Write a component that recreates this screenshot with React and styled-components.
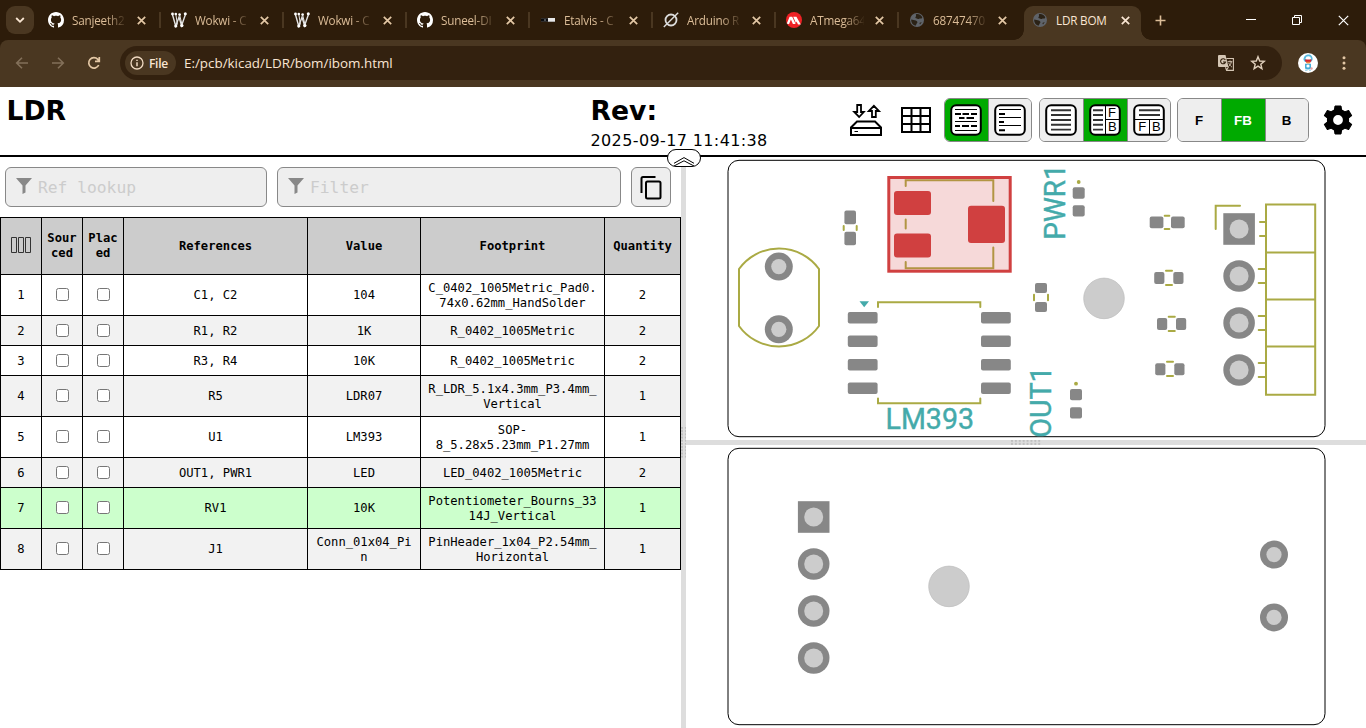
import React from "react";
import styled, { createGlobalStyle, css } from "styled-components";

const GlobalStyle = createGlobalStyle`
  * { box-sizing: border-box; }
  html, body { margin: 0; padding: 0; }
  body { width: 1366px; height: 728px; overflow: hidden; background: #fff; }
  svg { display: block; flex: none; }
`;

const MONO = '"DejaVu Sans Mono", "Liberation Mono", monospace';
const UI = '"Open Sans", "Noto Sans", sans-serif';

/* ---------- browser chrome ---------- */

const Screen = styled.div`
  display: flex;
  flex-direction: column;
  width: 1366px;
  height: 728px;
  color: #000;
  font-family: "DejaVu Sans", sans-serif;
`;

const TabStrip = styled.div`
  display: flex;
  height: 40px;
  padding-left: 6px;
  background: #2d1c0a;
  font-family: ${UI};
`;

const TabSearch = styled.button`
  display: flex;
  align-items: center;
  justify-content: center;
  width: 28px;
  height: 28px;
  margin: 6px 4px 0 0;
  padding: 0;
  border: 0;
  border-radius: 9px;
  background: #4a3721;
`;

const Tab = styled.div`
  position: relative;
  display: flex;
  align-items: center;
  width: 123px;
  height: 40px;
  padding-left: 10px;
  color: ${(p) => (p.$active ? "#fae6d3" : "#dcbd98")};
  ${(p) =>
    p.$active &&
    css`
      width: 117px;
      height: 34px;
      margin: 6px 0 0 2px;
      padding: 0 0 6px 8px;
      border-radius: 9px 9px 0 0;
      background: #4a3721;
      &::before,
      &::after {
        content: "";
        position: absolute;
        bottom: 0;
        width: 10px;
        height: 10px;
      }
      &::before {
        left: -10px;
        background: radial-gradient(circle at 0 0, transparent 9.5px, #4a3721 10px);
      }
      &::after {
        right: -10px;
        background: radial-gradient(circle at 100% 0, transparent 9.5px, #4a3721 10px);
      }
    `}
`;

const TabTitle = styled.span`
  flex: none;
  width: 54px;
  margin-left: 8px;
  font-size: 11.7px;
  line-height: 18px;
  letter-spacing: -0.2px;
  white-space: nowrap;
  ${(p) =>
    p.$fade &&
    css`
      mask-image: linear-gradient(90deg, #000 34px, transparent 55px);
    `}
`;

const TabClose = styled.span`
  margin-left: 10.5px;
`;

const TabDivider = styled.i`
  width: 2px;
  height: 16px;
  margin-left: auto;
  background: #4a3721;
`;

const StripAction = styled.div`
  display: flex;
  align-items: center;
  justify-content: center;
  width: ${(p) => p.$w}px;
  height: 40px;
  margin-left: ${(p) => p.$gap || 0}px;
`;

const ToolbarBack = styled.div`
  background: #2d1c0a;
`;

const Toolbar = styled.div`
  display: flex;
  align-items: center;
  height: 47px;
  padding: 0 13px 1px 14px;
  border-radius: 8px 8px 0 0;
  background: #4a3721;
  font-family: ${UI};
`;

const NavIcon = styled.div`
  width: 16px;
  height: 16px;
  margin-right: 20px;
`;

const AddressBar = styled.div`
  display: flex;
  align-items: center;
  width: 1162px;
  height: 34px;
  margin-left: -2px;
  padding: 0 16px 0 5px;
  border-radius: 17px;
  background: #33210f;
`;

const FileChip = styled.div`
  display: flex;
  align-items: center;
  gap: 5px;
  width: 51px;
  height: 24px;
  padding-left: 5px;
  border-radius: 12px;
  background: #4a3721;
  color: #fae6d3;
  font-size: 12px;
  font-weight: 600;
  letter-spacing: -0.3px;
`;

const Url = styled.span`
  flex: 1;
  margin-left: 8px;
  color: #fae6d3;
  font-size: 13.4px;
`;

const AddressIcons = styled.div`
  display: flex;
  gap: 16px;
`;

const Avatar = styled.div`
  margin: 0 24px 0 16px;
`;

/* ---------- page header ---------- */

const TopBar = styled.header`
  position: relative;
  display: flex;
  height: 70px;
  border-bottom: 2px solid #000;
`;

const FileInfo = styled.div`
  display: flex;
  width: 850px;
  padding: 7px 0 0 6.5px;
`;

const InfoColumn = styled.div`
  width: ${(p) => p.$w}px;
`;

const InfoTitle = styled.div`
  font-size: 26.67px;
  font-weight: 700;
  line-height: 34px;
`;

const InfoDate = styled.div`
  padding-top: 3px;
  font-size: 16px;
  line-height: 20px;
  letter-spacing: 0.38px;
`;

const Controls = styled.div`
  display: flex;
  align-items: flex-start;
  padding-top: 11px;
`;

const IconControl = styled.div`
  display: flex;
  align-items: center;
  height: 44px;
  margin-right: ${(p) => p.$gap || 0}px;
`;

const ButtonGroup = styled.div`
  display: flex;
  height: 44px;
  margin-right: ${(p) => p.$gap}px;
  overflow: hidden;
  border: 1px solid #888;
  border-radius: 6px;
`;

const GroupButton = styled.button`
  display: flex;
  align-items: center;
  justify-content: center;
  width: 44px;
  padding: 0 1px 0 0;
  border: 0;
  border-left: 1px solid #888;
  background: ${(p) => (p.$on ? "#0a0" : "#eee")};
  color: ${(p) => (p.$on ? "#fff" : "#000")};
  font: bold 13.33px "Liberation Sans", sans-serif;
  &:first-child {
    width: 43px;
    border-left: 0;
  }
  &:last-child {
    width: 43px;
  }
`;

const CollapseHandle = styled.div`
  position: absolute;
  left: 667px;
  top: 62px;
  z-index: 2;
  display: flex;
  justify-content: center;
  width: 34px;
  height: 18px;
  padding-top: 6px;
  border: 1px solid #000;
  border-radius: 9px;
  background: #fff;
`;

/* ---------- parts list ---------- */

const Main = styled.main`
  display: flex;
  flex: 1;
  min-height: 0;
`;

const BomPane = styled.section`
  width: 681px;
`;

const SearchRow = styled.div`
  display: flex;
  gap: 10px;
  height: 60px;
  padding: 10px 5px;
`;

const FilterField = styled.div`
  display: flex;
  align-items: center;
  width: ${(p) => p.$w}px;
  height: 40px;
  padding-left: 10px;
  border: 1px solid #888;
  border-radius: 6px;
  background: #eee;
  svg {
    margin-top: -2px;
  }
`;

const FilterInput = styled.input`
  flex: 1;
  min-width: 0;
  margin-left: 6px;
  padding: 0;
  border: 0;
  outline: 0;
  background: none;
  font: 16.3px ${MONO};
  &::placeholder {
    color: #ccc;
    opacity: 1;
  }
`;

const CopyButton = styled.button`
  display: flex;
  align-items: center;
  justify-content: center;
  width: 40px;
  height: 40px;
  padding: 0 1px 1px 0;
  border: 1px solid #888;
  border-radius: 6px;
  background: #eee;
`;

const BomTable = styled.table`
  width: 681px;
  table-layout: fixed;
  border: 0 solid #000;
  border-width: 1px 0 0 1px;
  border-spacing: 0;
  font: 12.17px/15px ${MONO};
  text-align: center;
`;

const cell = css`
  padding: 1px 5px 0;
  border: 0 solid #000;
  border-width: 0 1px 1px 0;
  word-break: break-all;
  vertical-align: middle;
`;

const HeadCell = styled.th`
  ${cell}
  height: 57px;
  padding: 0 4px;
  background: #ccc;
`;

const BomRow = styled.tr`
  height: ${(p) => (p.$tall ? 41 : 30)}px;
  background: ${(p) => (p.$selected ? "#cfc" : p.$alt ? "#f2f2f2" : "#fff")};
`;

const Cell = styled.td`
  ${cell}
`;

const CheckCell = styled.td`
  ${cell}
  padding: 0 0 1px;
`;

const Check = styled.input`
  display: block;
  width: 13px;
  height: 13px;
  margin: 0 auto;
`;

const ColumnsIcon = styled.svg`
  margin: -2px auto 0;
`;

/* ---------- board views ---------- */

const VGutter = styled.div`
  display: flex;
  justify-content: center;
  align-items: center;
  width: 5px;
  background: #ddd;
`;

const HGutter = styled(VGutter)`
  width: 100%;
  height: 5px;
`;

const Grip = styled.i`
  width: ${(p) => (p.$h ? 31 : 5)}px;
  height: ${(p) => (p.$h ? 5 : 31)}px;
  background: radial-gradient(circle at 1px 1px, #bfbfbf 1px, transparent 1.2px) 0 0 / 3.9px 3.2px;
`;

const BoardPane = styled.section`
  display: flex;
  flex-direction: column;
  width: 680px;
`;

const columns = [41, 41, 41, 184, 113, 184, 76];

const parts = [
  ["C1, C2", "104", ["C_0402_1005Metric_Pad0.", "74x0.62mm_HandSolder"], 2],
  ["R1, R2", "1K", ["R_0402_1005Metric"], 2],
  ["R3, R4", "10K", ["R_0402_1005Metric"], 2],
  ["R5", "LDR07", ["R_LDR_5.1x4.3mm_P3.4mm_", "Vertical"], 1],
  ["U1", "LM393", ["SOP-", "8_5.28x5.23mm_P1.27mm"], 1],
  ["OUT1, PWR1", "LED", ["LED_0402_1005Metric"], 2],
  ["RV1", "10K", ["Potentiometer_Bourns_33", "14J_Vertical"], 1],
  ["J1", "Conn_01x04_Pin", ["PinHeader_1x04_P2.54mm_", "Horizontal"], 1],
];

/* ---------- icons ---------- */

const Cross = ({ size = 9, color = "#e3c7a5", w = 1.7 }) => (
  <svg width={size} height={size} viewBox={`0 0 ${size} ${size}`}>
    <path d={`M.8 .8L${size - 0.8} ${size - 0.8}M${size - 0.8} .8L.8 ${size - 0.8}`} stroke={color} strokeWidth={w} />
  </svg>
);

const GithubIcon = () => (
  <svg width="16" height="16" viewBox="0 0 16 16">
    <path
      fill="#fff"
      d="M8 0C3.58 0 0 3.58 0 8c0 3.54 2.29 6.53 5.47 7.59.4.07.55-.17.55-.38 0-.19-.01-.82-.01-1.49-2.01.37-2.53-.49-2.69-.94-.09-.23-.48-.94-.82-1.13-.28-.15-.68-.52-.01-.53.63-.01 1.08.58 1.23.82.72 1.21 1.87.87 2.33.66.07-.52.28-.87.51-1.07-1.78-.2-3.64-.89-3.64-3.95 0-.87.31-1.59.82-2.15-.08-.2-.36-1.02.08-2.12 0 0 .67-.21 2.2.82.64-.18 1.32-.27 2-.27s1.36.09 2 .27c1.53-1.04 2.2-.82 2.2-.82.44 1.1.16 1.92.08 2.12.51.56.82 1.27.82 2.15 0 3.07-1.87 3.75-3.65 3.95.29.25.54.73.54 1.48 0 1.07-.01 1.93-.01 2.2 0 .21.15.46.55.38A8.01 8.01 0 0 0 16 8c0-4.42-3.58-8-8-8z"
    />
  </svg>
);

const WokwiIcon = () => (
  <svg width="16" height="16" viewBox="0 0 16 16" fill="none" stroke="#e4e4e4">
    <path d="M1.3 2L4.7 14L8 5.2L10.6 13.6L14.6 2" strokeWidth="1.4" />
    <path d="M4.8 2L6.4 12.6M8.6 2.8L11 12.6" strokeWidth="1" />
    <g fill="#fff" stroke="none">
      <circle cx="1.5" cy="2" r="1.4" />
      <circle cx="4.8" cy="2" r="1.3" />
      <circle cx="8.6" cy="2.5" r="1.3" />
      <circle cx="14.3" cy="1.8" r="1.5" />
      <circle cx="4.8" cy="14" r="1.6" />
      <circle cx="10.8" cy="13.6" r="1.7" />
    </g>
  </svg>
);

const EtalvisIcon = () => (
  <svg width="16" height="16" viewBox="0 0 16 16">
    <rect x="1" y="6" width="14" height="4" fill="#55504c" />
    <rect x="1" y="6.5" width="7" height="3" fill="#0b0b0e" />
    <rect x="8" y="6" width="7" height="3.6" fill="#e8e8e8" />
    <path d="M4 8h2" stroke="#8c9196" />
  </svg>
);

const ArduinoIcon = () => (
  <svg width="16" height="16" viewBox="0 0 16 16" fill="none" stroke="#dcdcdc">
    <circle cx="8" cy="8" r="5.5" strokeWidth="1.8" />
    <path d="M.8 15L15.2 .8" strokeWidth="1.4" />
  </svg>
);

const MicrochipIcon = () => (
  <svg width="16" height="16" viewBox="0 0 16 16">
    <circle cx="8" cy="8" r="8" fill="#ee2125" />
    <path d="M.8 11.5L3.6 4.8H6.2L9.6 12H6.9L4.9 7.6L3 12.2zM7.2 4.8H10.4L14.8 12.4L12 12.4L10.6 9.6L9.9 11z" fill="#fff" />
  </svg>
);

const GlobeIcon = () => (
  <svg width="16" height="16" viewBox="0 0 16 16">
    <circle cx="8" cy="8" r="7" fill="#5f6369" />
    <path
      d="M6.8 2.3C9.6 1.6 12.4 3 13.3 5.6C12.4 7.6 11.6 6 10.2 6.8C9 7.6 8.6 6.6 7 6.2C5.4 5.8 7.8 4.6 6.8 2.3zM2.2 7.4L5.8 8.2C7 8.6 8.8 9 8.4 10.6C7.8 11.6 7.2 11.8 7 13.6C4 13.2 2 10.6 2.2 7.4zM12.8 10L11 12.4L10.4 11z"
      fill="#2b2216"
    />
  </svg>
);

const tabs = [
  ["Sanjeeth2", GithubIcon],
  ["Wokwi - C", WokwiIcon],
  ["Wokwi - C", WokwiIcon],
  ["Suneel-DI", GithubIcon],
  ["Etalvis - C", EtalvisIcon],
  ["Arduino R", ArduinoIcon],
  ["ATmega64", MicrochipIcon],
  ["68747470", GlobeIcon],
];

const SaveIcon = () => (
  <svg width="32" height="32" viewBox="0 0 32 32" fill="none" stroke="#000" strokeWidth="2">
    <path d="M1 31V23.5L7 17.5H25L31 23.5V31ZM1 24H31" />
    <path d="M4.5 27.5H8" strokeWidth="1" />
    <path d="M7.2 1H11V8H13.8L9.1 13L4.2 8H7.2Z" strokeWidth="1.8" />
    <path d="M22 13H25.8V7H29L23.9 1.8L18.8 7H22Z" strokeWidth="1.8" />
  </svg>
);

const GridIcon = () => (
  <svg width="32" height="32" viewBox="0 0 32 32" fill="none" stroke="#000" strokeWidth="2">
    <path d="M2 4H30V28H2ZM2 12H30M2 20H30M11.5 4V28M20.5 4V28" />
  </svg>
);

const Page = ({ children }) => (
  <svg width="32" height="32" viewBox="0 0 32 32" fill="none" stroke="#000">
    <rect x="1.2" y="1.2" width="29.6" height="29.6" rx="5" fill="#fff" strokeWidth="2" />
    {children}
  </svg>
);

const letter = {
  fill: "#000",
  stroke: "none",
  fontFamily: '"Liberation Sans", sans-serif',
  fontSize: 13,
  fontWeight: 400,
  textAnchor: "middle",
};

const Funnel = () => (
  <svg width="16" height="16" viewBox="0 0 16 16">
    <path d="M0 0H16L9.5 7.5V14.5L6.5 16V7.5Z" fill="#888" />
  </svg>
);

const Gear = () => (
  <svg width="32" height="32" viewBox="0 0 32 32" fill="none">
    <circle cx="16" cy="16" r="8" stroke="#000" strokeWidth="6.2" />
    {[0, 60, 120, 180, 240, 300].map((a) => (
      <path key={a} d="M12.3 6.5L13 2H19L19.7 6.5Z" fill="#000" stroke="#000" strokeLinejoin="round" transform={`rotate(${a} 16 16)`} />
    ))}
  </svg>
);

/* ---------- board drawings ---------- */

const Pads = ({ items, r = 2, fill = "#878787" }) =>
  items.map(([x1, y1, x2, y2], i) => (
    <rect key={i} x={x1} y={y1} width={x2 - x1} height={y2 - y1} rx={r} fill={fill} />
  ));

const Pin = ({ x, y, r = 15.8, hole = 9.5, square }) => (
  <g fill="#878787">
    {square ? <rect x={x - r} y={y - r} width={2 * r} height={2 * r} /> : <circle cx={x} cy={y} r={r} />}
    <circle cx={x} cy={y} r={hole} fill="#ccc" />
  </g>
);

const Outline = ({ y }) => (
  <rect x="728" y={y} width="597" height="276.4" rx="11" fill="none" stroke="#000" strokeWidth="1" />
);

const MountHole = ({ x, y }) => <circle cx={x} cy={y} r="20.3" fill="#ccc" stroke="#bbb" strokeWidth=".7" />;

const silkText = {
  fill: "#4aa",
  stroke: "#4aa",
  strokeWidth: 0.4,
  fontFamily: "Roboto, sans-serif",
  fontSize: 29,
  lengthAdjust: "spacingAndGlyphs",
};

const FrontBoard = () => (
  <svg width="680" height="283" viewBox="686 157 680 283">
    <Outline y={160.3} />
    <MountHole x={1104} y={298.4} />
    <g fill="none" stroke="#aa4" strokeWidth="2" strokeLinecap="round">
      <path d="M739 269V326M819 269V326M739 269A49.2 49.2 0 0 1 819 269M739 326A49.2 49.2 0 0 0 819 326" />
      <path d="M843.7 226V230M856.7 226V230" />
      <path d="M905.7 186V180.3H993.3V201M905.7 219.5V228.5M905.7 262V268.3H993.3V247.5" />
      <path d="M878 307V302.3H980.3V307M878 398.5V403.3H980.3V398.5" />
      <path d="M1034 294.7V300.3M1048 294.7V300.3" />
      <path d="M1164.7 215.7H1169.3M1164.7 229H1169.3" />
      <path d="M1166 270.7H1172M1166 285H1172" />
      <path d="M1168.7 316.7H1174.8M1168.7 331H1174.8" />
      <path d="M1167 361.7H1173M1167 376H1173" />
      <path d="M1240 205.7H1215.7V229" />
      <path d="M1266 204.5H1315.2V394.7H1266ZM1266 252.5H1315M1266 299.4H1315M1266 346.4H1315" />
      <path d="M1260 222H1266M1260 236H1266M1258.7 269H1266M1258.7 283H1266M1258.7 316H1266M1258.7 330H1266M1258.7 363H1266M1258.7 377H1266" />
    </g>
    <g fill="#aa4">
      <circle cx="1078.7" cy="182" r="1.9" />
      <circle cx="1076" cy="383.7" r="1.9" />
    </g>
    <Pin x={778.8} y={266.6} r={14} hole={7.6} />
    <Pin x={778.8} y={329.3} r={14} hole={7.6} />
    <Pads
      items={[
        [844.4, 210.5, 856, 224.3],
        [844.4, 231.8, 856, 245.3],
        [1035, 283, 1047, 293],
        [1035, 302, 1047, 312],
        [1072.7, 187.3, 1084.7, 198.7],
        [1072.7, 205.2, 1084.7, 216.5],
        [1070, 389, 1082, 400.3],
        [1070, 407.2, 1082, 418.5],
        [1149.7, 216.6, 1163.4, 228.2],
        [1171, 216.6, 1184.7, 228.2],
        [1154.2, 272, 1164.4, 284],
        [1173.3, 272, 1183.5, 284],
        [1157, 318, 1167.2, 330],
        [1176, 318, 1186.2, 330],
        [1155.2, 363.2, 1165.4, 375.2],
        [1174.3, 363.2, 1184.5, 375.2],
      ]}
    />
    {[312.1, 335.5, 359, 382.5].map((y) => (
      <Pads key={y} items={[[847.8, y, 877.6, y + 11.4], [981, y, 1010.8, y + 11.4]]} />
    ))}
    <path d="M859.5 301.2H869L864.2 307.2Z" fill="#4aa" />
    <rect x="888.8" y="177.5" width="121.4" height="93.7" fill="#d04040" fillOpacity=".2" stroke="#d04040" strokeWidth="3" />
    <Pads
      r={3}
      fill="#d04040"
      items={[
        [894, 191, 931, 215],
        [894, 233.4, 931, 257.6],
        [968, 205.7, 1005, 243],
      ]}
    />
    <Pin x={1239.1} y={229} square />
    {[276, 323, 370].map((y) => (
      <Pin key={y} x={1239.1} y={y} />
    ))}
    <text x="885.5" y="428.8" textLength="88.5" {...silkText}>LM393</text>
    <text textLength="75.5" transform="translate(1064.6 239.7) rotate(-90)" {...silkText}>PWR1</text>
    <text textLength="71.5" transform="translate(1050.8 437.8) rotate(-90)" {...silkText}>OUT1</text>
  </svg>
);

const BackBoard = () => (
  <svg width="680" height="283" viewBox="686 445 680 283">
    <Outline y={448.3} />
    <MountHole x={949} y={586.4} />
    <Pin x={813.7} y={517} square />
    {[564, 611, 658].map((y) => (
      <Pin key={y} x={813.7} y={y} />
    ))}
    <Pin x={1274} y={554.6} r={14} hole={7.6} />
    <Pin x={1274} y={617.4} r={14} hole={7.6} />
  </svg>
);

/* ---------- sections ---------- */

function BrowserChrome() {
  return (
    <>
      <TabStrip>
        <TabSearch>
          <svg width="10" height="8" viewBox="0 0 10 8" fill="none" stroke="#fae6d3" strokeWidth="1.8">
            <path d="M1.2 2L5 5.8L8.8 2" />
          </svg>
        </TabSearch>
        {tabs.map(([title, Icon], i) => (
          <Tab key={i}>
            <Icon />
            <TabTitle $fade>{title}</TabTitle>
            <TabClose><Cross /></TabClose>
            {i < 7 && <TabDivider />}
          </Tab>
        ))}
        <Tab $active>
          <GlobeIcon />
          <TabTitle>LDR BOM</TabTitle>
          <TabClose><Cross color="#fae6d3" /></TabClose>
        </Tab>
        <StripAction $w={39}>
          <svg width="11" height="11" viewBox="0 0 11 11" stroke="#dcbd98" strokeWidth="1.6">
            <path d="M5.5 .5V10.5M.5 5.5H10.5" />
          </svg>
        </StripAction>
        <StripAction $w={46} $gap={48}>
          <svg width="10" height="2"><rect width="10" height="1" fill="#fff" /></svg>
        </StripAction>
        <StripAction $w={46}>
          <svg width="10" height="10" viewBox="0 0 10 10" fill="none" stroke="#fff">
            <path d="M.5 2.5H7.5V9.5H.5ZM2.5 2.5V.5H9.5V7.5H7.5" />
          </svg>
        </StripAction>
        <StripAction $w={46}>
          <Cross size={11} color="#fff" w={1.2} />
        </StripAction>
      </TabStrip>
      <ToolbarBack>
        <Toolbar>
          <NavIcon>
            <svg width="16" height="16" viewBox="0 0 16 16" fill="none" stroke="#83705a" strokeWidth="1.6">
              <path d="M14 8H3M8 2.7L2.7 8L8 13.3" />
            </svg>
          </NavIcon>
          <NavIcon>
            <svg width="16" height="16" viewBox="0 0 16 16" fill="none" stroke="#83705a" strokeWidth="1.6">
              <path d="M2 8H13M8 2.7L13.3 8L8 13.3" />
            </svg>
          </NavIcon>
          <NavIcon>
            <svg width="16" height="16" viewBox="0 0 16 16" fill="none" stroke="#e3c7a5" strokeWidth="1.7">
              <path d="M12.7 10A5.2 5.2 0 1 1 11.8 4.4L13.2 6M13.3 2V6.3H9" />
            </svg>
          </NavIcon>
          <AddressBar>
            <FileChip>
              <svg width="14" height="14" viewBox="0 0 14 14" fill="none" stroke="#f0dac2" strokeWidth="1.3">
                <circle cx="7" cy="7" r="6" />
                <path d="M7 6.2V10.2M7 3.8V5.1" strokeWidth="1.5" />
              </svg>
              File
            </FileChip>
            <Url>E:/pcb/kicad/LDR/bom/ibom.html</Url>
            <AddressIcons>
              <svg width="16" height="16" viewBox="0 0 16 16">
                <path d="M1 0H7.5L10.5 12H1A1 1 0 0 1 0 11V1A1 1 0 0 1 1 0Z" fill="#d5c6b4" />
                <path d="M7.3 5.1A2.5 2.5 0 1 0 7.5 7H5" fill="none" stroke="#33210f" strokeWidth="1.1" />
                <path d="M8.3 3.5H15.4V15.4H8.6L7.5 12.3M8.5 15L10.5 12" fill="none" stroke="#d5c6b4" strokeWidth="1.1" />
                <path d="M9.6 6.7H14.3M12 5.5V6.7M13.3 6.7C13 9.4 11.5 10.6 10.5 11.4M10.8 8.2C11.5 10 12.6 11 13.8 12" fill="none" stroke="#d5c6b4" />
              </svg>
              <svg width="16" height="16" viewBox="0 0 16 16" fill="none" stroke="#e0cfbb" strokeWidth="1.4">
                <path d="M8 1.7L9.7 6L14.3 6.3L10.8 9.2L11.9 13.7L8 11.2L4.1 13.7L5.2 9.2L1.7 6.3L6.3 6Z" />
              </svg>
            </AddressIcons>
          </AddressBar>
          <Avatar>
            <svg width="20" height="20" viewBox="0 0 20 20">
              <circle cx="10" cy="10" r="10" fill="#fff" />
              <path d="M5.5 7C5.5 3 8 1.5 10.5 1.5S15 3.5 14.5 7L13 9H7Z" fill="#58b9df" />
              <ellipse cx="10.3" cy="5.2" rx="2.6" ry="2" fill="#fff" />
              <path d="M6.8 6.5H13.7Q13 10 10.2 10Q7.5 10 6.8 6.5Z" fill="#d72630" />
              <path d="M8 8.8H12.5L11.5 10.4H9Z" fill="#ef8c3c" />
              <path d="M7 10.8H13V15.5Q10 17.5 7 15.5Z" fill="#48aed9" />
              <circle cx="10" cy="13" r="1.6" fill="#fff" />
              <circle cx="13.5" cy="15.5" r="1.2" fill="#e8a0a0" />
              <path d="M7 17.2H9.5M11 17.2H13" stroke="#8acbe4" />
            </svg>
          </Avatar>
          <svg width="4" height="16" viewBox="0 0 4 16" fill="#e3c7a5">
            <circle cx="2" cy="2.8" r="1.5" />
            <circle cx="2" cy="8" r="1.5" />
            <circle cx="2" cy="13.2" r="1.5" />
          </svg>
        </Toolbar>
      </ToolbarBack>
    </>
  );
}

const listLines = { stroke: "#333", strokeWidth: 1.9 };

function Header() {
  return (
    <TopBar>
      <FileInfo>
        <InfoColumn $w={584}>
          <InfoTitle>LDR</InfoTitle>
        </InfoColumn>
        <InfoColumn $w={240}>
          <InfoTitle>Rev:</InfoTitle>
          <InfoDate>2025-09-17 11:41:38</InfoDate>
        </InfoColumn>
      </FileInfo>
      <Controls>
        <IconControl $gap={18}><SaveIcon /></IconControl>
        <IconControl $gap={12}><GridIcon /></IconControl>
        <ButtonGroup $gap={7}>
          <GroupButton $on>
            <Page>
              <path d="M5 5.5H27M5 17.5H27M5 26.5H27" strokeWidth="1" />
              <path d="M5 10H11M12.5 10H19M21 10H27M9 14H14.5M16.5 14H24M5 22H10M12 22H19M21 22H27" strokeWidth="1.8" />
            </Page>
          </GroupButton>
          <GroupButton>
            <Page>
              <path d="M5 10H11M5 18H10M5 26.3H11" strokeWidth="1.9" />
              <path d="M5 5.5H27M5 13.5H27M5 21.5H27" strokeWidth="1" />
            </Page>
          </GroupButton>
        </ButtonGroup>
        <ButtonGroup $gap={6}>
          <GroupButton>
            <Page>
              <path d="M6 6.2H26M6 11H26M6 16H26M6 20.8H26M6 25.6H26" {...listLines} />
            </Page>
          </GroupButton>
          <GroupButton $on>
            <Page>
              <path d="M16.5 1V31M16.5 15.5H31" />
              <path d="M4 6.2H14M4 11H14M4 16H14M4 20.8H14M4 25.6H14" {...listLines} />
              <text x="23" y="13" {...letter}>F</text>
              <text x="23.3" y="27.3" {...letter}>B</text>
            </Page>
          </GroupButton>
          <GroupButton>
            <Page>
              <path d="M1 15.5H31M16.5 16V31" />
              <path d="M6 6.2H27M6 11H27" {...listLines} />
              <text x="9.3" y="27.3" {...letter}>F</text>
              <text x="23.3" y="27.3" {...letter}>B</text>
            </Page>
          </GroupButton>
        </ButtonGroup>
        <ButtonGroup $gap={13}>
          <GroupButton>F</GroupButton>
          <GroupButton $on>FB</GroupButton>
          <GroupButton>B</GroupButton>
        </ButtonGroup>
        <IconControl><Gear /></IconControl>
      </Controls>
      <CollapseHandle>
        <svg width="22" height="10" viewBox="0 0 22 10" fill="none" stroke="#000">
          <path d="M1 7.3L11 1.6L21 7.3M1 10L11 4.8L21 10" />
        </svg>
      </CollapseHandle>
    </TopBar>
  );
}

function PartsList() {
  return (
    <BomPane>
      <SearchRow>
        <FilterField $w={262}>
          <Funnel />
          <FilterInput placeholder="Ref lookup" />
        </FilterField>
        <FilterField $w={344}>
          <Funnel />
          <FilterInput placeholder="Filter" />
        </FilterField>
        <CopyButton>
          <svg width="24" height="28" viewBox="0 0 24 28" fill="none" stroke="#000" strokeWidth="2">
            <path d="M2.5 20V5.5Q2.5 4 4 4H16.5" />
            <rect x="7" y="8.5" width="14.5" height="17" rx="1.5" />
          </svg>
        </CopyButton>
      </SearchRow>
      <BomTable>
        <colgroup>
          {columns.map((w, i) => (
            <col key={i} width={w} />
          ))}
        </colgroup>
        <thead>
          <tr>
            <HeadCell>
              <ColumnsIcon width="21" height="17" viewBox="0 0 21 17" fill="none" stroke="#333">
                <path d="M.5 .5H5.5V15.5H.5ZM7.5 .5H12.5V15.5H7.5ZM14.5 .5H19.5V15.5H14.5Z" />
              </ColumnsIcon>
            </HeadCell>
            {["Sourced", "Placed", "References", "Value", "Footprint", "Quantity"].map((name) => (
              <HeadCell key={name}>{name}</HeadCell>
            ))}
          </tr>
        </thead>
        <tbody>
          {parts.map(([refs, value, footprint, qty], i) => (
            <BomRow key={refs} $tall={footprint.length > 1} $alt={i % 2 === 1} $selected={i === 6}>
              <Cell>{i + 1}</Cell>
              <CheckCell><Check type="checkbox" /></CheckCell>
              <CheckCell><Check type="checkbox" /></CheckCell>
              <Cell>{refs}</Cell>
              <Cell>{value}</Cell>
              <Cell>
                {footprint[0]}
                {footprint[1] && <><br />{footprint[1]}</>}
              </Cell>
              <Cell>{qty}</Cell>
            </BomRow>
          ))}
        </tbody>
      </BomTable>
    </BomPane>
  );
}

export default function App() {
  return (
    <Screen>
      <GlobalStyle />
      <BrowserChrome />
      <Header />
      <Main>
        <PartsList />
        <VGutter><Grip /></VGutter>
        <BoardPane>
          <FrontBoard />
          <HGutter><Grip $h /></HGutter>
          <BackBoard />
        </BoardPane>
      </Main>
    </Screen>
  );
}
